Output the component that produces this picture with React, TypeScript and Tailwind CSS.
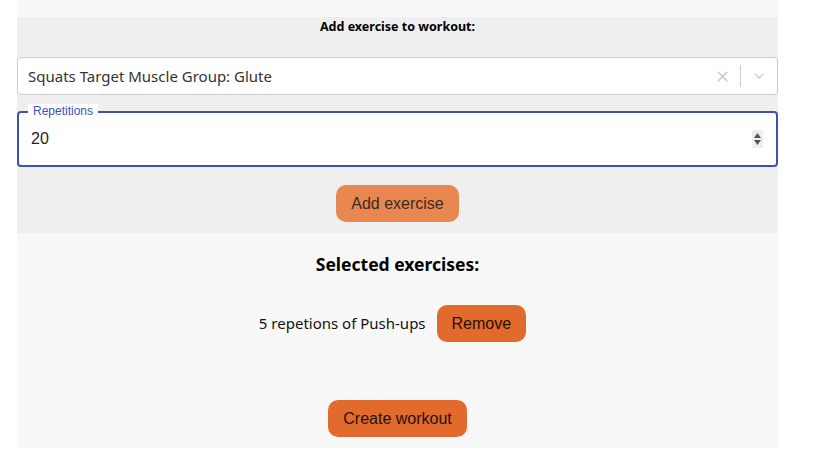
import { X, ChevronDown } from 'lucide-react'

function ExerciseSelect() {
  return (
    <div className="flex h-[38px] w-full items-center rounded-[4px] border border-[#cccccc] bg-white">
      <div className="flex-grow pl-[10px] text-[15px] text-[#333333]">
        Squats Target Muscle Group: Glute
      </div>
      <div className="flex h-full items-center">
        <div className="flex w-[36px] items-center justify-center text-[#cccccc]">
          <X size={17} strokeWidth={2.4} />
        </div>
        <div className="h-[22px] w-px bg-[#cccccc]"></div>
        <div className="flex w-[36px] items-center justify-center text-[#cccccc]">
          <ChevronDown size={16} strokeWidth={1.8} />
        </div>
      </div>
    </div>
  )
}

function RepetitionsInput() {
  return (
    <div className="relative h-[56px] w-full rounded-[4px] border-2 border-[#3f51b5] bg-white">
      <span
        className="absolute -top-[9px] left-[9px] bg-white px-[5px] text-[12px] leading-[14px] text-[#3f51b5]"
        style={{ fontFamily: 'Arial, "Liberation Sans", sans-serif' }}
      >
        Repetitions
      </span>
      <div className="flex h-full items-center justify-between pl-[12px] pr-[13px]">
        <span
          className="text-[16px] text-[#222222]"
          style={{ fontFamily: 'Arial, "Liberation Sans", sans-serif' }}
        >
          20
        </span>
        <div className="flex h-[18px] w-[11px] flex-col items-center justify-center gap-[2px] bg-[#eeeeee]">
          <svg width="7" height="5" viewBox="0 0 7 5">
            <path d="M3.5 0 L7 5 L0 5 Z" fill="#555555" />
          </svg>
          <svg width="7" height="5" viewBox="0 0 7 5">
            <path d="M0 0 L7 0 L3.5 5 Z" fill="#555555" />
          </svg>
        </div>
      </div>
    </div>
  )
}

export default function App() {
  return (
    <div
      className="min-h-screen bg-white"
      style={{ fontFamily: '"Noto Sans", "Open Sans", sans-serif' }}
    >
      <div className="ml-[17px] w-[761px] bg-[#f8f8f8] pt-[17px]">
        <div className="flex flex-col items-center bg-[#efefef] pb-[11px]">
          <h3 className="text-[12.5px] font-bold leading-[20px] text-black">
            Add exercise to workout:
          </h3>
          <div className="mt-[20px] w-full">
            <ExerciseSelect />
          </div>
          <div className="mt-[16px] w-full">
            <RepetitionsInput />
          </div>
          <button
            className="mt-[18px] h-[37px] rounded-[10px] bg-[#e8874f] px-[15px] text-[16px] text-[#3b2a1e]"
            style={{ fontFamily: 'Arial, "Liberation Sans", sans-serif' }}
          >
            Add exercise
          </button>
        </div>

        <div className="flex flex-col items-center pb-[11px] pt-[19px]">
          <h2 className="text-[17.5px] font-bold leading-[24px] text-black">
            Selected exercises:
          </h2>
          <div className="mt-[29px] flex items-center gap-[11px]">
            <span className="text-[15px] text-[#111111]">5 repetions of Push-ups</span>
            <button
              className="mr-[10px] h-[37px] rounded-[10px] bg-[#e26a2c] px-[15px] text-[16px] text-[#1f1208]"
              style={{ fontFamily: 'Arial, "Liberation Sans", sans-serif' }}
            >
              Remove
            </button>
          </div>
          <button
            className="mt-[58px] h-[37px] rounded-[10px] bg-[#e26a2c] px-[15px] text-[16px] text-[#1f1208]"
            style={{ fontFamily: 'Arial, "Liberation Sans", sans-serif' }}
          >
            Create workout
          </button>
        </div>
      </div>
    </div>
  )
}
